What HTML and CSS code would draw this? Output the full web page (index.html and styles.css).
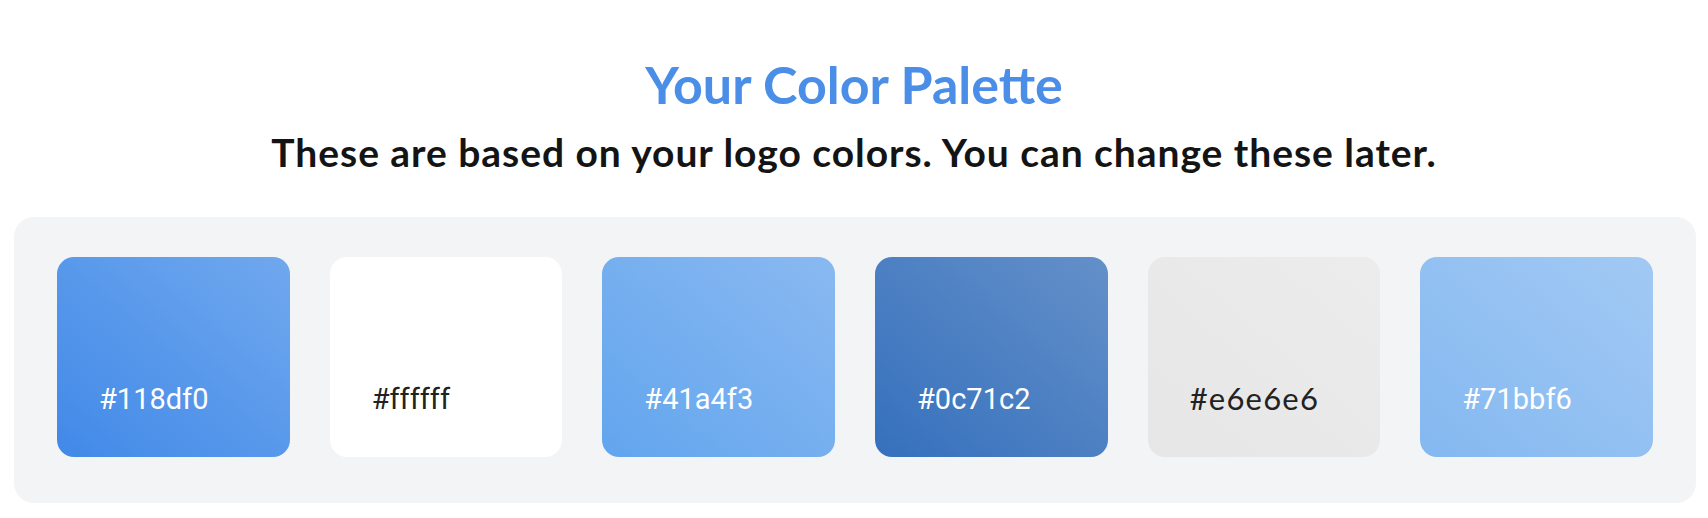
FILE: index.html
```html
<!DOCTYPE html>
<html lang="en">
<head>
<meta charset="utf-8">
<title>Your Color Palette</title>
<link rel="stylesheet" href="styles.css">
</head>
<body>
<main class="page">
  <header class="intro">
    <h1 class="title">Your Color Palette</h1>
    <p class="subtitle">These are based on your logo colors. You can change these later.</p>
  </header>
  <section class="palette">
    <div class="swatch swatch-1"><span class="hex">#118df0</span></div>
    <div class="swatch swatch-2"><span class="hex hex-dark">#ffffff</span></div>
    <div class="swatch swatch-3"><span class="hex">#41a4f3</span></div>
    <div class="swatch swatch-4"><span class="hex">#0c71c2</span></div>
    <div class="swatch swatch-5"><span class="hex hex-dark hex-geo">#e6e6e6</span></div>
    <div class="swatch swatch-6"><span class="hex">#71bbf6</span></div>
  </section>
</main>
</body>
</html>
```
FILE: styles.css
```css
html, body {
  margin: 0;
  padding: 0;
  background: #ffffff;
}

.page {
  padding-top: 53px;
}

.intro {
  text-align: center;
}

.title {
  margin: 0;
  font-family: "Lato", "Inter", sans-serif;
  font-weight: 700;
  font-size: 52px;
  line-height: 1.2;
  color: #4a8ee8;
}

.subtitle {
  margin: 14px 0 0;
  font-family: "Lato", "Inter", sans-serif;
  font-weight: 700;
  font-size: 39px;
  line-height: 1.2;
  letter-spacing: 0.95px;
  color: #141414;
}

.palette {
  margin: 41px 12px 0 14px;
  padding: 40px 43px 46px;
  background: #f3f4f6;
  border-radius: 20px;
  display: flex;
  gap: 40px;
}

.swatch {
  flex: 1 1 0;
  height: 200px;
  border-radius: 17px;
  display: flex;
  align-items: flex-end;
  padding: 0 0 40px 42px;
  box-sizing: border-box;
}

.hex {
  font-family: "Roboto", "Liberation Sans", sans-serif;
  font-size: 29px;
  line-height: 35px;
  color: #ffffff;
}

.hex-dark {
  color: #222222;
}

.hex-geo {
  font-family: "Lato", sans-serif;
  font-size: 31px;
  letter-spacing: 1.2px;
  position: relative;
  top: -1px;
}

.swatch-1 { background: linear-gradient(to top right, #4189e8, #70a8ee); }
.swatch-2 { background: #ffffff; }
.swatch-3 { background: linear-gradient(to top right, #62a5ee, #8ab9f1); }
.swatch-4 { background: linear-gradient(to top right, #3570bd, #6490c9); }
.swatch-5 { background: linear-gradient(to top right, #e6e6e6, #ececec); }
.swatch-6 { background: linear-gradient(to top right, #84b8f0, #a2c9f4); }
```
